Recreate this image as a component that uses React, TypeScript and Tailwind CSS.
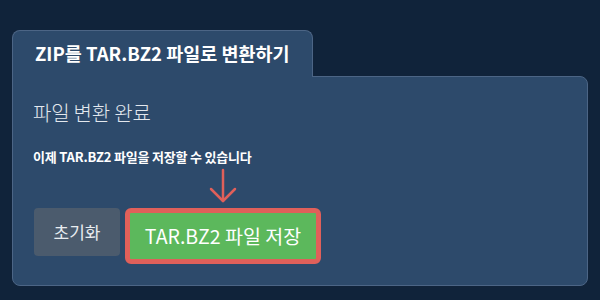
import React from 'react';

const font = { fontFamily: '"Noto Sans CJK KR", "Noto Sans", sans-serif' };

export default function App() {
  return (
    <div className="w-[600px] h-[300px] bg-[#10233a] pt-[30px] px-[12px]" style={font}>
      <div className="flex">
        <div className="relative z-10 -mb-px h-[47px] w-[301px] rounded-t-lg border border-b-0 border-[#4c6585] bg-[#2d4a6b] flex items-center pl-[22px]">
          <span className="text-[18.5px] font-bold text-white">ZIP를 TAR.BZ2 파일로 변환하기</span>
        </div>
      </div>
      <div className="h-[210px] rounded-b-lg rounded-tr-lg border border-[#4c6585] bg-[#2d4a6b] px-[20px] pt-[21px]">
        <h2 className="text-[20px] font-light text-[#e3e8ee] leading-[30px] tracking-[-0.2px]">파일 변환 완료</h2>
        <p className="mt-[20px] text-[13px] font-bold text-white leading-[18px] tracking-[-0.2px]">이제 TAR.BZ2 파일을 저장할 수 있습니다</p>
        <div className="mt-[42px] flex items-start gap-[5px] pl-[1px]">
          <button className="h-[48px] w-[86px] rounded bg-[#4b5b6d] text-[17px] text-[#e8ecf0]">초기화</button>
          <div className="relative">
            <svg className="absolute left-1/2 -translate-x-1/2 -top-[40px]" width="32" height="36" viewBox="0 0 32 36" fill="none" stroke="#e0605a" strokeWidth="2.5" strokeLinecap="round" strokeLinejoin="round">
              <path d="M16 2 V33" />
              <path d="M4 21 L16 33 L28 21" />
            </svg>
            <button className="h-[56px] w-[196px] rounded-md border-[5px] border-[#e0605a] bg-[#5cb85c] text-[19.5px] text-white">TAR.BZ2 파일 저장</button>
          </div>
        </div>
      </div>
    </div>
  );
}
